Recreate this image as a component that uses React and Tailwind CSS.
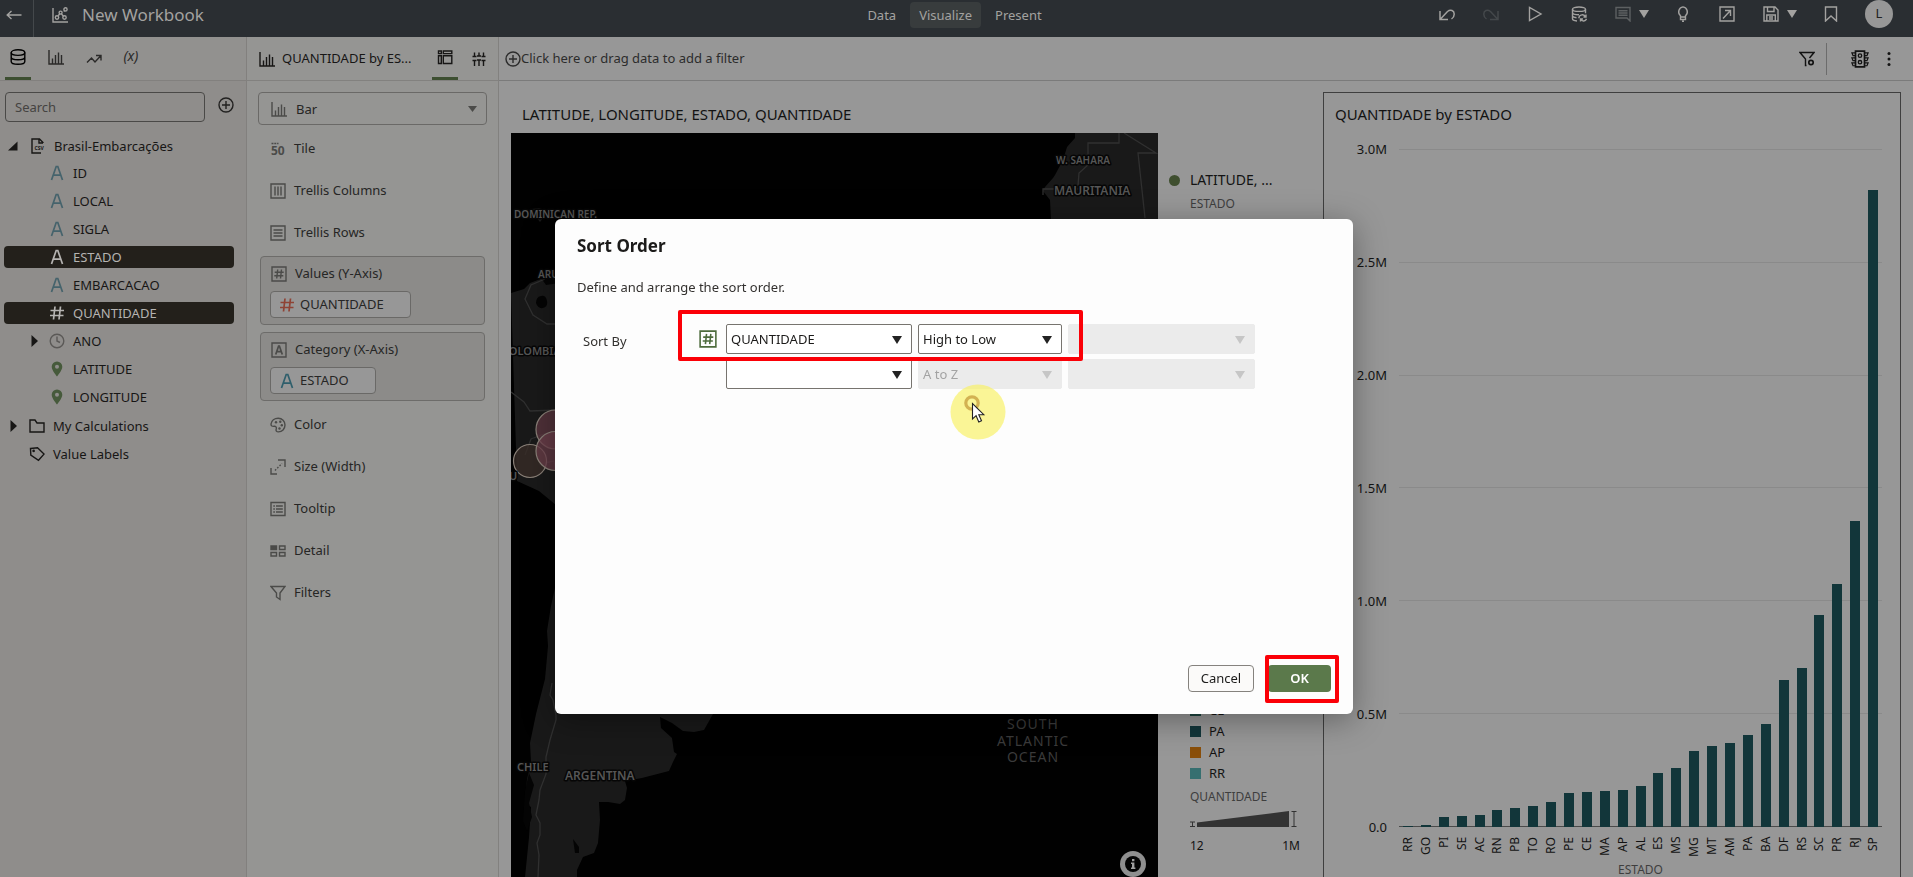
import React from "react";

function Icon({ size = 16, children, className = "" }) {
  return (
    <svg
      width={size}
      height={size}
      viewBox="0 0 16 16"
      fill="none"
      stroke="currentColor"
      strokeWidth="1.4"
      aria-hidden="true"
      className={`shrink-0 ${className}`}
    >
      {children}
    </svg>
  );
}

const BarsIcon = (p) => (
  <Icon {...p}>
    <path d="M1 1v14h15M4.5 15V9.5M7.5 15V6M10.5 15V3.5M13.5 15V6" />
  </Icon>
);
const ScatterIcon = (p) => (
  <Icon {...p}>
    <path d="M1 1v14h15M6.2 8.8l1.6-2M9.5 7l2 2.2M12 4.5l.5-1" />
    <circle cx="5" cy="10.5" r="1.7" />
    <circle cx="8.6" cy="5.6" r="1.5" />
    <circle cx="12.5" cy="10.5" r="1.7" />
    <circle cx="13.5" cy="2.4" r="1.6" />
  </Icon>
);
const BackIcon = (p) => (
  <Icon {...p}>
    <path d="M15.5 8H1M5.5 4L1.2 8l4.3 4" />
  </Icon>
);
const DatabaseIcon = (p) => (
  <Icon {...p}>
    <ellipse cx="8" cy="3.6" rx="6.8" ry="2.8" />
    <path d="M1.2 3.6v8.8c0 1.6 3 2.8 6.8 2.8s6.8-1.2 6.8-2.8V3.6M1.2 8c0 1.6 3 2.8 6.8 2.8s6.8-1.2 6.8-2.8" />
  </Icon>
);
const TrendIcon = (p) => (
  <Icon {...p}>
    <path d="M1 11.5l4.5-4.5 3.5 4 5.5-6M10 4.5h5v5" />
  </Icon>
);
const LayoutIcon = (p) => (
  <Icon {...p}>
    <path d="M1.5 2h2.8v2.6H1.5zM6.3 2h8.500v2.600H6.300zM1.500 6.800h2.800v7.700H1.500zM6.300 6.800h8.500v7.700H6.300z" />
  </Icon>
);
const SlidersIcon = (p) => (
  <Icon {...p}>
    <path d="M3.500 1.500v4M1.500 9.500h4M3.500 9.500v5.500M1.500 5.500h4M8 1.500v3.500M6 5h4M8 9v6M6 9h4M12.500 1.500v4M10.500 5.500h4M12.500 9.500v5.500M10.500 9.500h4" />
  </Icon>
);
const PlusCircleIcon = (p) => (
  <Icon {...p}>
    <circle cx="8" cy="8" r="7" />
    <path d="M8 4v8M4 8h8" />
  </Icon>
);
const CsvIcon = (p) => (
  <Icon {...p}>
    <path d="M13 5V4.5L9.5 1H2v14h9M9 1v4h4" />
    <text x="4.5" y="11.6" fontSize="5" fontWeight="700" fill="currentColor" stroke="none">CSV</text>
  </Icon>
);
const LetterIcon = (p) => (
  <Icon {...p}>
    <path d="M2.5 15L7.2 1.5h1.6L13.5 15M4.3 10.2h7.4" strokeWidth="1.7" />
  </Icon>
);
const HashIcon = (p) => (
  <Icon {...p}>
    <path d="M6 1.5l-1.5 13M11.5 1.5l-1.5 13M1.5 5.5h13.5M1 10.5h13.5" strokeWidth="1.7" />
  </Icon>
);
const ClockIcon = (p) => (
  <Icon {...p}>
    <circle cx="8" cy="8" r="6.8" />
    <path d="M8 3.5V8l3 1.5" />
  </Icon>
);
const PinIcon = (p) => (
  <Icon {...p}>
    <path
      fill="currentColor"
      stroke="none"
      fillRule="evenodd"
      d="M8 .5a5.3 5.3 0 0 0-5.3 5.3C2.7 9.500 8 15.500 8 15.500s5.300-6 5.300-9.700A5.300 5.300 0 0 0 8 .5zm0 3.300a2 2 0 1 1 0 4 2 2 0 0 1 0-4z"
    />
  </Icon>
);
const FolderIcon = (p) => (
  <Icon {...p}>
    <path d="M1 14V2h5l2 3h7v9z" />
  </Icon>
);
const TagIcon = (p) => (
  <Icon {...p}>
    <path d="M1.500 2.500l7-.7 6.500 6.300-5.500 6.200L1.800 9z" />
    <circle cx="4.600" cy="4.900" r=".6" fill="currentColor" />
  </Icon>
);
const TileIcon = (p) => (
  <Icon {...p}>
    <path d="M1.500 2.500h7" strokeDasharray="2 .8" />
    <text x="1" y="14" fontSize="12" fontWeight="700" fill="currentColor" stroke="none">50</text>
  </Icon>
);
const TrellisColumnsIcon = (p) => (
  <Icon {...p}>
    <path d="M1 1h14v14H1zM5 3.500v9M8 3.500v9M11 3.500v9" />
  </Icon>
);
const TrellisRowsIcon = (p) => (
  <Icon {...p}>
    <path d="M1 1h14v14H1zM3.500 5h9M3.500 8h9M3.500 11h9" />
  </Icon>
);
const HashBoxIcon = (p) => (
  <Icon {...p}>
    <path d="M1 1h14v14H1zM6.700 3.500l-1 9M10.500 3.500l-1 9M3.700 6.300h9M3.300 9.700h9" />
  </Icon>
);
const LetterBoxIcon = (p) => (
  <Icon {...p}>
    <path d="M1 1h14v14H1z" />
    <path d="M4.700 12.500L7.600 4h.8l2.900 8.500M5.800 9.600h4.400" strokeWidth="1.700" />
  </Icon>
);
const PaletteIcon = (p) => (
  <Icon {...p}>
    <path d="M1 7C1.500 3.500 4.500 1.200 8.200 1.200c4 0 6.800 3 6.800 6.800 0 4-3 6.900-6.500 6.900-2 0-2.900-1.300-2.300-2.800.7-1.900-.5-3-2.200-2.800C2.400 9.500.8 9 1 7z" />
    <g fill="currentColor" stroke="none">
      <circle cx="6" cy="5.200" r="1.200" />
      <circle cx="10.300" cy="4.700" r="1.200" />
      <circle cx="11.800" cy="8.300" r="1.200" />
      <circle cx="9.500" cy="11.500" r="1.200" />
    </g>
  </Icon>
);
const SizeIcon = (p) => (
  <Icon {...p}>
    <path d="M1 9v6h6M8 1h7v7" />
    <path d="M5 11.500l7-7" strokeDasharray="1.600 1.600" />
  </Icon>
);
const TooltipIcon = (p) => (
  <Icon {...p}>
    <path d="M1 1.500h14v13H1zM3.300 5h1.600M3.300 8h1.600M3.300 11h1.600M6 5h6.800M6 8h6.800M6 11h6.800" />
  </Icon>
);
const DetailIcon = (p) => (
  <Icon {...p}>
    <path d="M1 3h5.500v3.500H1z" fill="currentColor" />
    <path d="M9.500 3H15v3.500H9.500zM1 9.500h5.500V13H1zM9.500 9.500H15V13H9.500z" />
  </Icon>
);
const FunnelIcon = (p) => (
  <Icon {...p}>
    <path d="M1 1.500h14L10 8v6.500L6.500 12V8z" />
  </Icon>
);
const FunnelGearIcon = (p) => (
  <Icon {...p}>
    <path d="M7.500 14.500H6.500V8L1 1.500h14L10.500 7" />
    <circle cx="12" cy="11.500" r="2.200" strokeWidth="1.700" />
  </Icon>
);
const TrafficIcon = (p) => (
  <Icon {...p}>
    <path d="M4 1h8v14H4z" strokeWidth="1.500" />
    <circle cx="8" cy="5" r="1.500" strokeWidth="1.200" />
    <circle cx="8" cy="10.800" r="1.500" strokeWidth="1.200" />
    <path d="M4 2.500H.8l1 2.500H4M4 7H.8l1 2.500H4M4 11.500H.8l1 2.500H4M12 2.500h3.200l-1 2.500H12M12 7h3.200l-1 2.500H12M12 11.500h3.200l-1 2.500H12" strokeWidth="1.100" />
  </Icon>
);
const DotsIcon = (p) => (
  <Icon {...p}>
    <g fill="currentColor" stroke="none">
      <circle cx="8" cy="2.500" r="1.500" />
      <circle cx="8" cy="8" r="1.500" />
      <circle cx="8" cy="13.500" r="1.500" />
    </g>
  </Icon>
);
const UndoIcon = (p) => (
  <Icon {...p}>
    <path d="M1 5v8.500h8M1.300 13.200L8.500 5.500c3-2.500 6.800-1 6.700 2.700 0 2.200-1.200 3.800-2.700 4.800" strokeWidth="1.500" />
  </Icon>
);
const RedoIcon = (p) => (
  <Icon {...p}>
    <path d="M15 5v8.500H7M14.700 13.200L7.500 5.500C4.500 3 .7 4.500.8 8.200c0 2.200 1.200 3.800 2.700 4.800" strokeWidth="1.500" />
  </Icon>
);
const PlayIcon = (p) => (
  <Icon {...p}>
    <path d="M2.500 1.500v13L14 8z" />
  </Icon>
);
const RefreshDataIcon = (p) => (
  <Icon {...p}>
    <ellipse cx="8" cy="3.200" rx="6.500" ry="2.200" />
    <path d="M1.500 3.200v9.600c0 1.100 1.800 2 4.500 2.200M14.500 3.200v4M1.500 6.500c0 1.200 2.900 2.200 6.500 2.200M1.500 9.800c0 1 1.800 1.800 4 2M7.800 12.200c.3-4 5.500-4.500 6.700-1.200M15 8.500V11h-2.500M15.500 12.800c-.8 2.800-4.600 2.700-5.700.7M9.500 15.500V13H12" />
  </Icon>
);
const CommentIcon = (p) => (
  <Icon {...p}>
    <path d="M1 1.500h14V15l-3-3H1zM3.500 4.800h9M3.500 7h9M3.500 9.200h9" />
  </Icon>
);
const BulbIcon = (p) => (
  <Icon {...p}>
    <path d="M5.500 11V9.700A5 5 0 0 1 8 .9a5 5 0 0 1 2.500 8.800V11zM5.500 11v2.500h5V11M7 15.300h2" />
  </Icon>
);
const ExportIcon = (p) => (
  <Icon {...p}>
    <path d="M1 1h14v14H1zM4 12.500l7-7.500M6 4.500h5.500V10" />
  </Icon>
);
const SaveIcon = (p) => (
  <Icon {...p}>
    <path d="M1 1h11l3 3v11H1zM4.500 1v4.500h6.500V1M3.800 15V9h8.500v6M6 11h4M6 13h4" />
  </Icon>
);
const BookmarkIcon = (p) => (
  <Icon {...p}>
    <path d="M2.500 1h11v14L8 10l-5.500 5z" />
  </Icon>
);

function Caret({ className = "" }) {
  return (
    <svg width="10" height="8" viewBox="0 0 10 8" fill="currentColor" aria-hidden="true" className={`shrink-0 ${className}`}>
      <path d="M0 0h10L5 8z" />
    </svg>
  );
}

function IconButton({ label, className = "", children }) {
  return (
    <button type="button" aria-label={label} className={`flex items-center justify-center ${className}`}>
      {children}
    </button>
  );
}

function Header() {
  return (
    <header className="grid h-[37px] shrink-0 grid-cols-[1fr_auto_1fr] bg-[#2a2e32] text-[#a3a2a0]">
      <div className="flex pb-2">
        <div className="-mb-2 flex w-[34px] border-r border-[#44484b] pb-2 pl-1.5">
          <IconButton label="Back"><BackIcon /></IconButton>
        </div>
        <div className="flex items-center gap-3.5 pl-[18px]">
          <ScatterIcon />
          <h1 className="text-[17px] leading-6">New Workbook</h1>
        </div>
      </div>
      <nav className="flex items-start gap-3.5 pr-1 pt-0.5 text-[13px] leading-[26px]">
        <button type="button">Data</button>
        <button type="button" className="rounded-sm bg-[#383c3d] px-[9px]">Visualize</button>
        <button type="button">Present</button>
      </nav>
      <div className="flex items-start justify-end gap-7 pr-5 pt-1.5">
        <IconButton label="Undo"><UndoIcon /></IconButton>
        <IconButton label="Redo" className="text-[#44484b]"><RedoIcon /></IconButton>
        <IconButton label="Preview"><PlayIcon /></IconButton>
        <IconButton label="Refresh data"><RefreshDataIcon /></IconButton>
        <IconButton label="Notes" className="gap-2">
          <CommentIcon className="text-[#5d6062]" />
          <Caret />
        </IconButton>
        <div className="-ml-0.5 flex gap-7">
          <IconButton label="Insights"><BulbIcon /></IconButton>
          <IconButton label="Export"><ExportIcon /></IconButton>
        </div>
        <IconButton label="Save" className="gap-2"><SaveIcon /><Caret /></IconButton>
        <div className="-ml-0.5 flex items-start gap-6">
          <IconButton label="Bookmark"><BookmarkIcon /></IconButton>
          <button
            type="button"
            aria-label="Account"
            className="-mt-1.5 ml-0.5 flex size-7 items-center justify-center rounded-full bg-[#979797] text-[13px] text-[#222]"
          >
            L
          </button>
        </div>
      </div>
    </header>
  );
}

const COLUMNS = [
  { name: "ID", Glyph: LetterIcon, tone: "text-[#45636c]" },
  { name: "LOCAL", Glyph: LetterIcon, tone: "text-[#45636c]" },
  { name: "SIGLA", Glyph: LetterIcon, tone: "text-[#45636c]" },
  { name: "ESTADO", Glyph: LetterIcon, selected: true },
  { name: "EMBARCACAO", Glyph: LetterIcon, tone: "text-[#45636c]" },
  { name: "QUANTIDADE", Glyph: HashIcon, selected: true },
  { name: "ANO", Glyph: ClockIcon, tone: "text-[#5b5957]", expandable: true },
  { name: "LATITUDE", Glyph: PinIcon, tone: "text-[#465a3b]" },
  { name: "LONGITUDE", Glyph: PinIcon, tone: "text-[#465a3b]" },
];

function Expander({ open }) {
  return (
    <svg width="10" height="12" viewBox="0 0 10 12" fill="currentColor" aria-hidden="true" className="shrink-0">
      {open ? <path d="M9.500 1.500v9H0z" /> : <path d="M1.500 0v12L8 6z" />}
    </svg>
  );
}

function DataPanel() {
  return (
    <aside className="flex w-[247px] shrink-0 flex-col border-r border-[#82807e] bg-[#8f8d8b] text-[#171615]">
      <div className="flex h-11 shrink-0 items-stretch gap-3 border-b border-[#82807e] bg-[#92918f] pl-[5px] text-[#2b2a29]">
        <button type="button" aria-label="Data" className="flex w-[26px] items-center justify-center border-b-[3px] border-[#3d4f31] text-black">
          <DatabaseIcon />
        </button>
        <IconButton label="Visualizations" className="w-[26px] pb-[3px]"><BarsIcon /></IconButton>
        <IconButton label="Analytics" className="w-[26px]"><TrendIcon /></IconButton>
        <IconButton label="Parameters" className="w-6 pb-1.5 text-sm italic">(x)</IconButton>
      </div>
      <div className="flex items-start gap-[13px] pl-[5px] pt-[11px]">
        <input
          type="text"
          aria-label="Search"
          placeholder="Search"
          className="h-[30px] w-[200px] rounded-sm border border-[#4a4947] bg-transparent px-[9px] text-[13px] placeholder:text-[#454341]"
        />
        <IconButton label="Add data" className="mt-[5px] text-[#222120]"><PlusCircleIcon /></IconButton>
      </div>
      <ul className="pl-1 pr-3 pt-2.5 text-[13px] leading-[22px]">
        <li className="flex h-7 items-center gap-3 pl-1">
          <Expander open />
          <CsvIcon />
          <span className="-ml-1">Brasil-Embarcações</span>
        </li>
        {COLUMNS.map(({ name, Glyph, tone, selected, expandable }) => (
          <li key={name} className="flex h-7 items-start pt-0.5">
            <button
              type="button"
              className={`flex h-[22px] w-full items-center rounded-[4px] pl-[26px] ${selected ? "bg-[#23201b] text-[#b5b3b1]" : ""}`}
            >
              <span className="flex w-[19px] items-center">{expandable && <Expander />}</span>
              <Glyph className={tone} />
              <span className="ml-2">{name}</span>
            </button>
          </li>
        ))}
        <li className="flex h-7 items-center gap-2.5 pl-[5px]">
          <Expander />
          <FolderIcon />
          <span className="-ml-0.5">My Calculations</span>
        </li>
        <li className="flex h-7 items-center gap-2 pl-[25px]">
          <TagIcon />
          <span>Value Labels</span>
        </li>
      </ul>
    </aside>
  );
}

function GrammarRow({ Glyph, children }) {
  return (
    <div className="flex h-[42px] items-center gap-2 pl-3 text-[#4b4b49]">
      <Glyph />
      <span className="text-[#262625]">{children}</span>
    </div>
  );
}

function DropZone({ Glyph, title, chipWidth, chip, ChipGlyph, chipTone }) {
  return (
    <div className="mx-0.5 h-[69px] rounded-sm border border-[#6d6c6a] bg-[#8c8b89] pl-[9px] pt-[7px]">
      <div className="flex h-5 items-center gap-2 pl-px text-[#4b4b49]">
        <Glyph />
        <span className="text-[#262625]">{title}</span>
      </div>
      <button
        type="button"
        className={`mt-[7px] flex h-[27px] items-center gap-[5px] rounded-[4px] border border-[#6a6967] bg-[#979797] pl-2 text-[#262625] ${chipWidth}`}
      >
        <ChipGlyph className={chipTone} />
        {chip}
      </button>
    </div>
  );
}

function GrammarPanel() {
  return (
    <section className="flex w-[252px] shrink-0 flex-col border-r border-[#82817f] bg-[#959593] text-[13px] text-[#171615]">
      <div className="flex h-11 shrink-0 items-stretch justify-between border-b border-[#82817f] pl-3 pr-1.5">
        <div className="flex items-center gap-[7px]">
          <BarsIcon />
          <h2 className="whitespace-nowrap">QUANTIDADE by ES...</h2>
        </div>
        <div className="flex gap-2">
          <button type="button" aria-label="Grammar" className="flex w-[26px] items-center justify-center border-b-[3px] border-[#3d4f31]">
            <LayoutIcon />
          </button>
          <IconButton label="Properties" className="w-[26px]"><SlidersIcon /></IconButton>
        </div>
      </div>
      <div className="px-[11px] pt-[11px]">
        <div className="relative mb-[3px] flex items-center">
          <BarsIcon className="absolute left-[13px] text-[#4b4b49]" />
          <select
            aria-label="Visualization type"
            className="h-[33px] w-full appearance-none rounded-sm border border-[#6a6967] bg-transparent pl-[37px] pt-0.5 text-[#262625]"
          >
            <option>Bar</option>
          </select>
          <svg width="9" height="6" viewBox="0 0 9 6" fill="#4b4b49" aria-hidden="true" className="pointer-events-none absolute right-2.5">
            <path d="M0 0h9L4.500 6z" />
          </svg>
        </div>
        <GrammarRow Glyph={TileIcon}>Tile</GrammarRow>
        <GrammarRow Glyph={TrellisColumnsIcon}>Trellis Columns</GrammarRow>
        <GrammarRow Glyph={TrellisRowsIcon}>Trellis Rows</GrammarRow>
        <div className="flex flex-col gap-[7px] pb-[3px] pt-0.5">
          <DropZone Glyph={HashBoxIcon} title="Values (Y-Axis)" chip="QUANTIDADE" chipWidth="w-[141px]" ChipGlyph={HashIcon} chipTone="text-[#8f4335]" />
          <DropZone Glyph={LetterBoxIcon} title="Category (X-Axis)" chip="ESTADO" chipWidth="w-[106px]" ChipGlyph={LetterIcon} chipTone="text-[#2f5f6c]" />
        </div>
        <GrammarRow Glyph={PaletteIcon}>Color</GrammarRow>
        <GrammarRow Glyph={SizeIcon}>Size (Width)</GrammarRow>
        <GrammarRow Glyph={TooltipIcon}>Tooltip</GrammarRow>
        <GrammarRow Glyph={DetailIcon}>Detail</GrammarRow>
        <GrammarRow Glyph={FunnelIcon}>Filters</GrammarRow>
      </div>
    </section>
  );
}

/* Map drawn on a 647 x 744 canvas; land masses and labels are clipped to it. */
function WorldMap() {
  return (
    <svg
      viewBox="0 0 647 744"
      preserveAspectRatio="xMinYMin slice"
      role="img"
      aria-label="Map of quantities by state"
      className="absolute inset-0 size-full"
    >
      <rect width="647" height="744" fill="#010101" />
      <g fill="#191919">
        <path d="M0 160l13-4 6-6 13-5 12-1h200v300l-20 100-22 37-9 16-10 2-11-1-11-8-12-6 1 11 11 10 2 14 3 2-4 8-4 9-27 7-17 3 2 7-2 12-5 4-12-2-9 0 1 18-2 23-4 10-11 4-6 13v7H14l4-40 2-30-6-4 2-24 4-16-1-20 6-29 9-35 3-33-1-15 4-25 8-36 0-35 0-25-3-5-17-14-22-10z" />
        <path d="M564 0v5l-8 9-4 13-8 15-2 3-8 9-2 4 7 9 1 20v30h107V0z" />
        <path d="M20 76l8-1 8 3 3 4-6 2-4 5-4-5-7-2z" />
      </g>
      <path d="M25 170q0-6 5-7t6 5-4 7-7-5zM30 145l18 0v5l-13 2zM18 640l5 12-5 18 3 14-5 14-4-10 2-30zM62 706l6 8 0 6-4 0z" fill="#040404" />
      <g fill="none" stroke="#303030" strokeWidth="1.300">
        <path d="M34 146l-14 6-6 14 8 16 14 9 20 0M0 259l13 10 6 9 28-1M14 322l6-16 16-6M28 331l15-3 2 12 6 0" />
        <path d="M41 550l-2 12 3 5 3 15 0 5-6 20-4 17 0 17-6 16-1 10-3 15 4 8 0 12-3 8 2 12-1 22" />
        <path d="M608 0v10h-31v22l-9 8-1 13M532 62v-6h36M613 0l32 20h-18l7 65" />
      </g>
      <g stroke="#8a8078" strokeWidth="1.200">
        <circle cx="19" cy="328" r="16.500" fill="#3a2d28" fillOpacity=".75" />
        <circle cx="44.500" cy="296.500" r="19.500" fill="#6b3d4a" fillOpacity=".65" />
        <circle cx="44.500" cy="318" r="19.500" fill="#6b3d4a" fillOpacity=".75" />
      </g>
      <g
        fill="#565656"
        stroke="#060606"
        strokeWidth="3"
        strokeLinejoin="round"
        fontSize="11"
        fontWeight="600"
        style={{ paintOrder: "stroke" }}
      >
        <text x="545" y="31" fontSize="10">W. SAHARA</text>
        <text x="543" y="62" fontSize="12">MAURITANIA</text>
        <text x="3" y="85" fontSize="10">DOMINICAN REP.</text>
        <text x="27" y="145" fontSize="10">ARUBA</text>
        <text x="-9" y="222">COLOMBIA</text>
        <text x="-22" y="347">PERU</text>
        <text x="6" y="638" fontSize="11">CHILE</text>
        <text x="54" y="647" fontSize="12">ARGENTINA</text>
      </g>
      <g fill="#3b3b3b" fontSize="14" textAnchor="middle" letterSpacing="1">
        <text x="522" y="596">SOUTH</text>
        <text x="522" y="613">ATLANTIC</text>
        <text x="522" y="629">OCEAN</text>
      </g>
    </svg>
  );
}

const LEGEND = [
  { code: "CE", swatch: "bg-[#1d453f]" },
  { code: "PA", swatch: "bg-[#12363a]" },
  { code: "AP", swatch: "bg-[#8a4f0a]" },
  { code: "RR", swatch: "bg-[#366f70]" },
];

function MapView() {
  return (
    <section className="flex min-w-0 flex-col pl-3">
      <h2 className="flex h-[52px] shrink-0 items-end pb-[7px] pl-[11px] text-[15px] leading-6">
        LATITUDE, LONGITUDE, ESTADO, QUANTIDADE
      </h2>
      <div className="flex min-h-0 flex-1">
        <div className="relative min-w-0 flex-1 overflow-hidden">
          <WorldMap />
          <button
            type="button"
            aria-label="Map information"
            className="absolute bottom-0 right-3 flex size-[26px] items-center justify-center rounded-full bg-[#8f8f8f]"
          >
            <svg width="18" height="18" viewBox="0 0 18 18" aria-hidden="true">
              <circle cx="9" cy="9" r="8" fill="#050505" />
              <path d="M8 4h2.400v2.200H8zM7 7.500h3.400v5h1V14H7v-1.500h1V9H7z" fill="#a0a0a0" />
            </svg>
          </button>
        </div>
        <div className="flex w-[165px] shrink-0 flex-col justify-between text-[13px] leading-[21px]">
          <div className="pl-[11px] pt-9">
            <div className="flex items-center gap-2.5 text-sm leading-[22px]">
              <span className="size-[11px] rounded-full bg-[#3f4f2f]" />
              LATITUDE, ...
            </div>
            <div className="pl-[21px] pt-0.5 text-xs leading-[21px] text-[#3e3e3e]">ESTADO</div>
          </div>
          <div className="pb-[21px] pl-8">
            <ul>
              {LEGEND.map(({ code, swatch }) => (
                <li key={code} className="flex items-center gap-2">
                  <span className={`size-[11px] ${swatch}`} />
                  {code}
                </li>
              ))}
            </ul>
            <div className="pt-0.5 text-xs leading-[21px] text-[#3e3e3e]">QUANTIDADE</div>
            <svg width="110" height="28" viewBox="0 0 110 28" aria-hidden="true">
              <path d="M7 15.500L99 4v16H7z" fill="#333" />
              <path d="M0 15h5M0 19.500h5M2.500 15v4.500M101.500 4.500h5M101.500 19.500h5M104 4.500v15" stroke="#333" fill="none" />
            </svg>
            <div className="flex w-[110px] justify-between text-xs leading-[21px]">
              <span>12</span>
              <span>1M</span>
            </div>
          </div>
        </div>
      </div>
    </section>
  );
}

/* Values in millions. */
const BARS = [
  ["RR", 0.006], ["GO", 0.009], ["PI", 0.044], ["SE", 0.05], ["AC", 0.054], ["RN", 0.077], ["PB", 0.083],
  ["TO", 0.094], ["RO", 0.112], ["PE", 0.149], ["CE", 0.153], ["MA", 0.16], ["AP", 0.165], ["AL", 0.182],
  ["ES", 0.24], ["MS", 0.262], ["MG", 0.337], ["MT", 0.359], ["AM", 0.371], ["PA", 0.407], ["BA", 0.456],
  ["DF", 0.651], ["RS", 0.704], ["SC", 0.936], ["PR", 1.075], ["RJ", 1.355], ["SP", 2.82],
];
const TICKS = ["3.0M", "2.5M", "2.0M", "1.5M", "1.0M", "0.5M", "0.0"];

function BarChartView() {
  return (
    <section className="mr-3 mt-[11px] flex min-w-0 flex-col border border-b-0 border-[#3f3f3f] pl-[11px] pr-[18px]">
      <h2 className="pt-[9px] text-[15px] leading-6">QUANTIDADE by ESTADO</h2>
      <div className="flex min-h-0 flex-1 gap-3 pt-[23px]">
        <div className="-my-2.5 flex w-[52px] shrink-0 flex-col justify-between text-right text-[13px] leading-5">
          {TICKS.map((t) => <span key={t}>{t}</span>)}
        </div>
        <div className="relative flex min-w-0 flex-1">
          <div className="absolute inset-0 flex flex-col justify-between">
            {TICKS.map((t, i) => (
              <div key={t} className={`h-px ${i === TICKS.length - 1 ? "bg-[#4a4a4a]" : "bg-[#8a8a8a]"}`} />
            ))}
          </div>
          <div className="relative flex min-w-0 flex-1 items-end">
            {BARS.map(([code, value]) => (
              <div key={code} className="flex h-full flex-1 items-end justify-center">
                <div className="w-2.5 bg-[#12363a]" style={{ height: `${(value / 3) * 100}%` }} />
              </div>
            ))}
          </div>
        </div>
      </div>
      <div className="flex h-[35px] shrink-0 pl-16 pt-2.5 text-xs leading-3">
        {BARS.map(([code]) => (
          <div key={code} className="flex flex-1 justify-center">
            <span className="h-5 rotate-180 text-right [writing-mode:vertical-rl]">{code}</span>
          </div>
        ))}
      </div>
      <div className="h-[15px] shrink-0 pl-16 text-center text-xs leading-[15px] text-[#3e3e3e]">ESTADO</div>
    </section>
  );
}

function Canvas() {
  return (
    <main className="flex min-w-0 flex-1 flex-col bg-[#979797] text-[#131313]">
      <div className="flex h-11 shrink-0 items-center justify-between border-b border-[#7b7b7b] pl-1.5 pr-4">
        <button type="button" className="flex items-center text-[13px] text-[#2c2c2c]">
          <PlusCircleIcon />
          Click here or drag data to add a filter
        </button>
        <div className="flex items-center gap-[11px]">
          <IconButton label="Filter settings"><FunnelGearIcon /></IconButton>
          <span className="h-8 w-px bg-[#6c6c6c]" />
          <div className="flex gap-3 pl-[13px]">
            <IconButton label="Data actions"><TrafficIcon size={18} /></IconButton>
            <IconButton label="More"><DotsIcon /></IconButton>
          </div>
        </div>
      </div>
      <div className="grid min-h-0 flex-1 grid-cols-[824fr_590fr]">
        <MapView />
        <BarChartView />
      </div>
    </main>
  );
}

function SortSelect({ label, value, disabled, className = "" }) {
  return (
    <div className={`relative flex items-center ${className}`}>
      <select
        aria-label={label}
        disabled={disabled}
        className={`h-[30px] w-full appearance-none rounded-xs border pl-1 pt-0.5 text-[13px] opacity-100 ${
          disabled ? "border-[#ebebeb] bg-[#ebebeb] text-[#a3a3a3]" : "border-[#77746f] bg-white text-[#1c1b1a]"
        }`}
      >
        <option>{value}</option>
      </select>
      <Caret className={`pointer-events-none absolute right-2.5 top-3 ${disabled ? "text-[#c6c6c6]" : "text-[#222]"}`} />
    </div>
  );
}

function SortDialog() {
  return (
    <div className="fixed inset-0 flex items-start justify-center pr-[5px] pt-[219px]">
      <div
        role="dialog"
        aria-modal="true"
        aria-labelledby="sort-title"
        className="relative flex h-[495px] w-[798px] flex-col rounded-md bg-[#fdfdfd] px-[22px] pb-[22px] pt-[15px] text-[#1c1b1a] shadow-[0_6px_32px_rgba(0,0,0,0.35)]"
      >
        <h2 id="sort-title" className="text-[17px] font-bold leading-6">Sort Order</h2>
        <p className="pt-[19px] text-[13px] leading-5 text-[#33312f]">Define and arrange the sort order.</p>
        <div className="flex pt-[27px]">
          <span className="w-[122px] shrink-0 pl-1.5 text-[13px] leading-[34px] text-[#33312f]">Sort By</span>
          <div className="grid grid-cols-[21px_186px_144px_187px] items-center gap-x-1.5 gap-y-[5px]">
            <HashBoxIcon size={18} className="text-[#4d6b3c]" />
            <SortSelect label="First sort column" value="QUANTIDADE" />
            <SortSelect label="First sort direction" value="High to Low" />
            <SortSelect label="First sort option" value="" disabled />
            <SortSelect label="Second sort column" value="" className="col-start-2" />
            <SortSelect label="Second sort direction" value="A to Z" disabled />
            <SortSelect label="Second sort option" value="" disabled />
          </div>
        </div>
        <div className="mt-auto flex justify-end gap-3.5">
          <button type="button" className="h-[27px] w-[66px] rounded-[4px] border border-[#85827e] bg-[#fbfaf9] text-[13px]">Cancel</button>
          <button type="button" className="h-[27px] w-[63px] rounded-[4px] bg-[#5b794b] text-[13px] font-semibold text-white">OK</button>
        </div>

        <div className="pointer-events-none absolute left-[123px] top-[91px] h-[51px] w-[405px] rounded-xs border-4 border-[#fb0007]" />
        <div className="pointer-events-none absolute bottom-[11px] right-3.5 h-12 w-[74px] rounded-xs border-4 border-[#fb0007]" />
        <svg width="56" height="56" viewBox="0 0 56 56" aria-hidden="true" className="pointer-events-none absolute left-[395px] top-[165px]">
          <circle cx="28" cy="28" r="27.500" fill="#f9f15f" fillOpacity=".65" />
          <circle cx="22" cy="19" r="6.200" fill="none" stroke="#cba646" strokeWidth="3.200" strokeOpacity=".85" />
          <path d="M22.500 19.500v15.500l3.600-3.300 2.700 6.200 2.700-1.200-2.700-6h5z" fill="#fff" stroke="#222" strokeWidth="1.100" />
        </svg>
      </div>
    </div>
  );
}

export default function App() {
  return (
    <div className="flex h-screen flex-col overflow-hidden font-['Noto_Sans','Open_Sans',sans-serif]">
      <Header />
      <div className="flex min-h-0 flex-1">
        <DataPanel />
        <GrammarPanel />
        <Canvas />
      </div>
      <SortDialog />
    </div>
  );
}
